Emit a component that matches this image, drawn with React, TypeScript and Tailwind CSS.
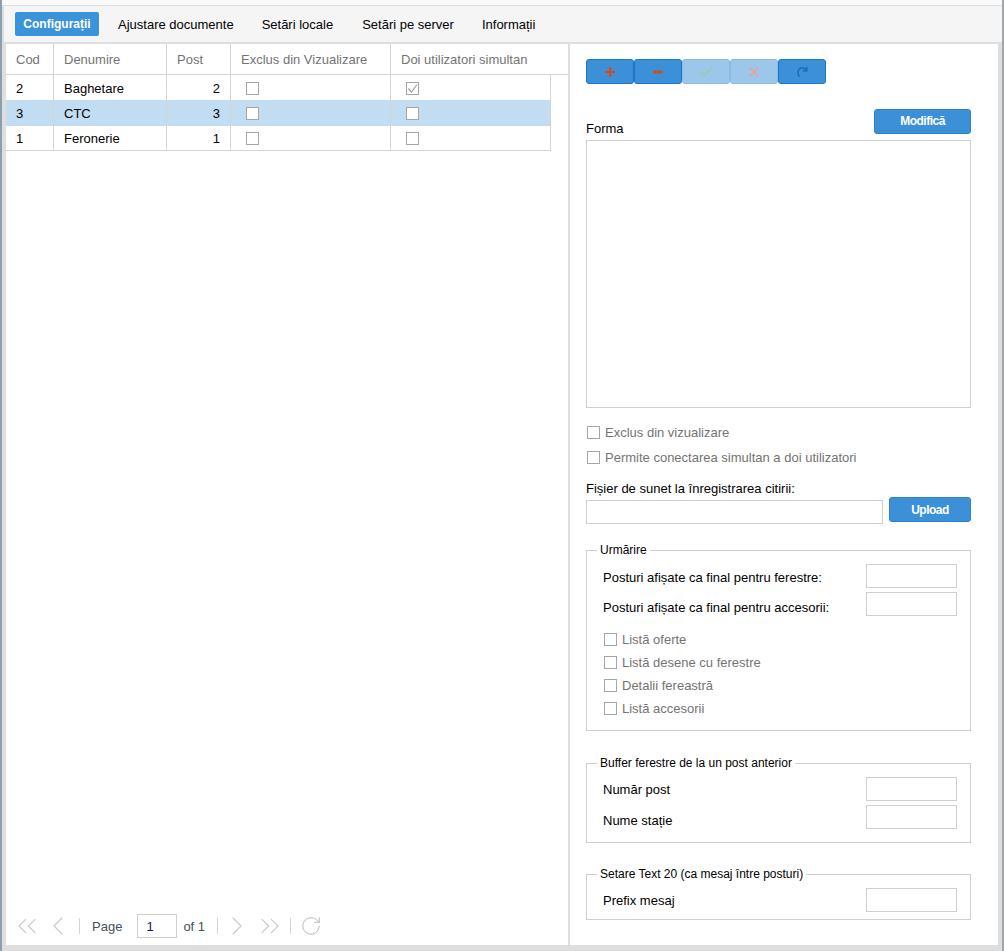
import React from "react";
import { ChevronsLeft, ChevronLeft, ChevronRight, ChevronsRight, RotateCw } from "lucide-react";

const rows = [
  { cod: "2", name: "Baghetare", post: "2", ex: false, doi: true, sel: false },
  { cod: "3", name: "CTC", post: "3", ex: false, doi: false, sel: true },
  { cod: "1", name: "Feronerie", post: "1", ex: false, doi: false, sel: false },
];

function Box({ checked = false }: { checked?: boolean }) {
  return (
    <span className="flex h-[13px] w-[13px] shrink-0 items-center justify-center border border-[#a6a6a6] bg-white">
      {checked && (
        <svg width="11" height="11" viewBox="0 0 11 11" fill="none">
          <path d="M1.5 5.5 L4.5 9 L10 1.5" stroke="#a0a0a0" strokeWidth="1.2" />
        </svg>
      )}
    </span>
  );
}

function Check({ label }: { label: string }) {
  return (
    <div className="flex h-[23px] items-center gap-[5px] text-[#737373]">
      <Box />
      <span>{label}</span>
    </div>
  );
}

function Field({ label, labelClass }: { label: string; labelClass: string }) {
  return (
    <div className="flex h-6 items-center justify-between">
      <span className={`text-black ${labelClass}`}>{label}</span>
      <span className="h-6 w-[91px] border border-[#cfcfcf] bg-white" />
    </div>
  );
}

function Group({ title, className, children }: { title: string; className: string; children: React.ReactNode }) {
  return (
    <fieldset className={`border border-[#cfcfcf] pl-4 pr-[13px] ${className}`}>
      <legend className="ml-[-6px] h-[14px] px-[3px] text-[12px] leading-[14px] text-black">{title}</legend>
      {children}
    </fieldset>
  );
}

function ToolBtn({ disabled, children }: { disabled?: boolean; children: React.ReactNode }) {
  return (
    <button className={`flex h-[25px] w-12 items-center justify-center rounded-[3px] border border-[#1a78c8] bg-[#3b90d8] ${disabled ? "opacity-50" : ""}`}>
      {children}
    </button>
  );
}

export default function App() {
  const font = { fontFamily: '"Liberation Sans", Arial, sans-serif' };
  return (
    <div style={font} className="flex h-[951px] w-[1004px] flex-col overflow-hidden border-x-2 border-l-[#8ba0ae] border-r-[#a3a7ab] bg-[#dedede] text-[13px] leading-[15px] text-black">
      <div className="h-[5px] bg-[#fafafa]" />
      <nav className="ml-[2px] flex h-[38px] items-start border-y border-[#dedede] bg-[#f5f5f5] pt-[6px]">
        <div className="ml-[11px] flex h-6 w-[84px] items-center justify-center rounded-[2px] bg-[#3b93d9] text-[12px] font-bold text-white">Configurații</div>
        <div className="ml-[19px] flex h-6 items-center">Ajustare documente</div>
        <div className="ml-[28px] flex h-6 items-center">Setări locale</div>
        <div className="ml-[29px] flex h-6 items-center">Setări pe server</div>
        <div className="ml-[28px] flex h-6 items-center">Informații</div>
      </nav>
      <div className="mx-[4px] flex h-[902px] gap-[2px] pt-[1px]">
        <section className="flex w-[562px] flex-col bg-white">
          <div className="grid h-[31px] grid-cols-[48px_113px_64px_160px_177px] border-b border-[#d4d4d4] text-[#737373]">
            {["Cod", "Denumire", "Post", "Exclus din Vizualizare", "Doi utilizatori simultan"].map((h, i) => (
              <div key={h} className={`flex items-center pl-[10px] ${i < 4 ? "border-r border-[#d4d4d4]" : ""}`}>{h}</div>
            ))}
          </div>
          <div className="w-[545px] border-r border-b border-[#d4d4d4]">
            {rows.map((r) => (
              <div key={r.cod} className={`grid h-[25px] grid-cols-[48px_113px_64px_160px_160px] ${r.sel ? "bg-[#c2dcf2] shadow-[0_1px_0_#c2dcf2]" : ""}`}>
                <div className="flex items-center border-r border-[#d4d4d4] pl-[10px] pt-[2px]">{r.cod}</div>
                <div className="flex items-center border-r border-[#d4d4d4] pl-[10px] pt-[2px]">{r.name}</div>
                <div className="flex items-center justify-end border-r border-[#d4d4d4] pr-[10px] pt-[2px]">{r.post}</div>
                <div className="flex items-center border-r border-[#d4d4d4] pl-[15px] pt-[2px]"><Box checked={r.ex} /></div>
                <div className="flex items-center pl-[15px] pt-[2px]"><Box checked={r.doi} /></div>
              </div>
            ))}
          </div>
          <div className="mt-auto mb-[7px] flex h-6 items-center text-[#44505c]">
            <ChevronsLeft className="ml-[5px] text-[#c8c8c8]" size={32} strokeWidth={0.8} />
            <ChevronLeft className="ml-[-1px] text-[#c8c8c8]" size={32} strokeWidth={0.8} />
            <span className="ml-[5px] h-4 w-px bg-[#d4d4d4]" />
            <span className="ml-3">Page</span>
            <span className="ml-[15px] flex h-6 w-10 items-center border border-[#cfcfcf] pl-2 text-[#1a1a4a]">1</span>
            <span className="ml-[6px]">of 1</span>
            <span className="ml-3 h-4 w-px bg-[#d4d4d4]" />
            <ChevronRight className="ml-[3px] text-[#c8c8c8]" size={32} strokeWidth={0.8} />
            <ChevronsRight className="ml-[1px] text-[#c8c8c8]" size={32} strokeWidth={0.8} />
            <span className="ml-[4px] h-4 w-px bg-[#d4d4d4]" />
            <RotateCw className="ml-[9px] text-[#b4b4b4]" size={22} strokeWidth={1} />
          </div>
        </section>
        <section className="flex-1 bg-white pl-4 pr-[27px]">
          <div className="mt-[15px] flex">
            <ToolBtn>
              <svg width="10" height="10" viewBox="0 0 10 10"><path d="M5 0v10M0 5h10" stroke="#e2470a" strokeWidth="2" /></svg>
            </ToolBtn>
            <ToolBtn>
              <svg width="10" height="10" viewBox="0 0 10 10"><path d="M0 5h10" stroke="#e2470a" strokeWidth="2.6" /></svg>
            </ToolBtn>
            <ToolBtn disabled>
              <svg width="12" height="10" viewBox="0 0 12 10" fill="none"><path d="M0.5 5.5 L4 9 L11.5 0.8" stroke="#3f9a2e" strokeWidth="1.4" /></svg>
            </ToolBtn>
            <ToolBtn disabled>
              <svg width="10" height="10" viewBox="0 0 10 10" fill="none"><path d="M0.5 0.5l9 9M9.5 0.5l-9 9" stroke="#f03a20" strokeWidth="1.4" /></svg>
            </ToolBtn>
            <ToolBtn>
              <svg width="11" height="11" viewBox="0 0 11 11" fill="none"><path d="M2.5 10.5C0.5 8.5 0.4 5 2.4 3C4.4 1.2 7.6 1.6 9 4M9.8 0.8v4h-4" stroke="#176fc0" strokeWidth="1.7" /></svg>
            </ToolBtn>
          </div>
          <div className="mt-[25px] flex h-[31px] items-end justify-between pb-[1px]">
            <span className="mb-[3px] leading-[15px]">Forma</span>
            <button className="mb-[5px] flex h-[25px] w-[97px] items-center justify-center rounded-[3px] border border-[#2a82cc] bg-[#3b90d8] text-[12px] font-bold tracking-[-0.5px] text-white">Modifică</button>
          </div>
          <div className="h-[268px] border border-[#cfcfcf]" />
          <div className="mt-[13px] flex flex-col gap-[2px] text-[#737373]">
            <div className="ml-[1px]"><Check label="Exclus din vizualizare" /></div>
            <div className="ml-[1px]"><Check label="Permite conectarea simultan a doi utilizatori" /></div>
          </div>
          <div className="mt-[12px] leading-[15px]">Fișier de sunet la înregistrarea citirii:</div>
          <div className="mt-[3px] flex items-start justify-between">
            <span className="mt-[1px] h-6 w-[297px] border border-[#cfcfcf]" />
            <button className="mt-[-2px] flex h-[25px] w-[82px] items-center justify-center rounded-[3px] border border-[#2a82cc] bg-[#3b90d8] pt-[1px] text-[12px] font-bold tracking-[-0.5px] text-white">Upload</button>
          </div>
          <Group title="Urmărire" className="mt-[19px] h-[188px]">
            <div className="mt-[7px]"><Field label="Posturi afișate ca final pentru ferestre:" labelClass="pt-[2px]" /></div>
            <div className="mt-1"><Field label="Posturi afișate ca final pentru accesorii:" labelClass="pt-[6px]" /></div>
            <div className="ml-[1px] mt-[12px]">
              <Check label="Listă oferte" />
              <Check label="Listă desene cu ferestre" />
              <Check label="Detalii fereastră" />
              <Check label="Listă accesorii" />
            </div>
          </Group>
          <Group title="Buffer ferestre de la un post anterior" className="mt-[25px] h-[87px]">
            <div className="mt-[7px]"><Field label="Număr post" labelClass="pt-0" /></div>
            <div className="mt-1"><Field label="Nume stație" labelClass="pt-[6px]" /></div>
          </Group>
          <Group title="Setare Text 20 (ca mesaj între posturi)" className="mt-[24px] h-[53px]">
            <div className="mt-[7px]"><Field label="Prefix mesaj" labelClass="pt-0" /></div>
          </Group>
        </section>
      </div>
    </div>
  );
}
